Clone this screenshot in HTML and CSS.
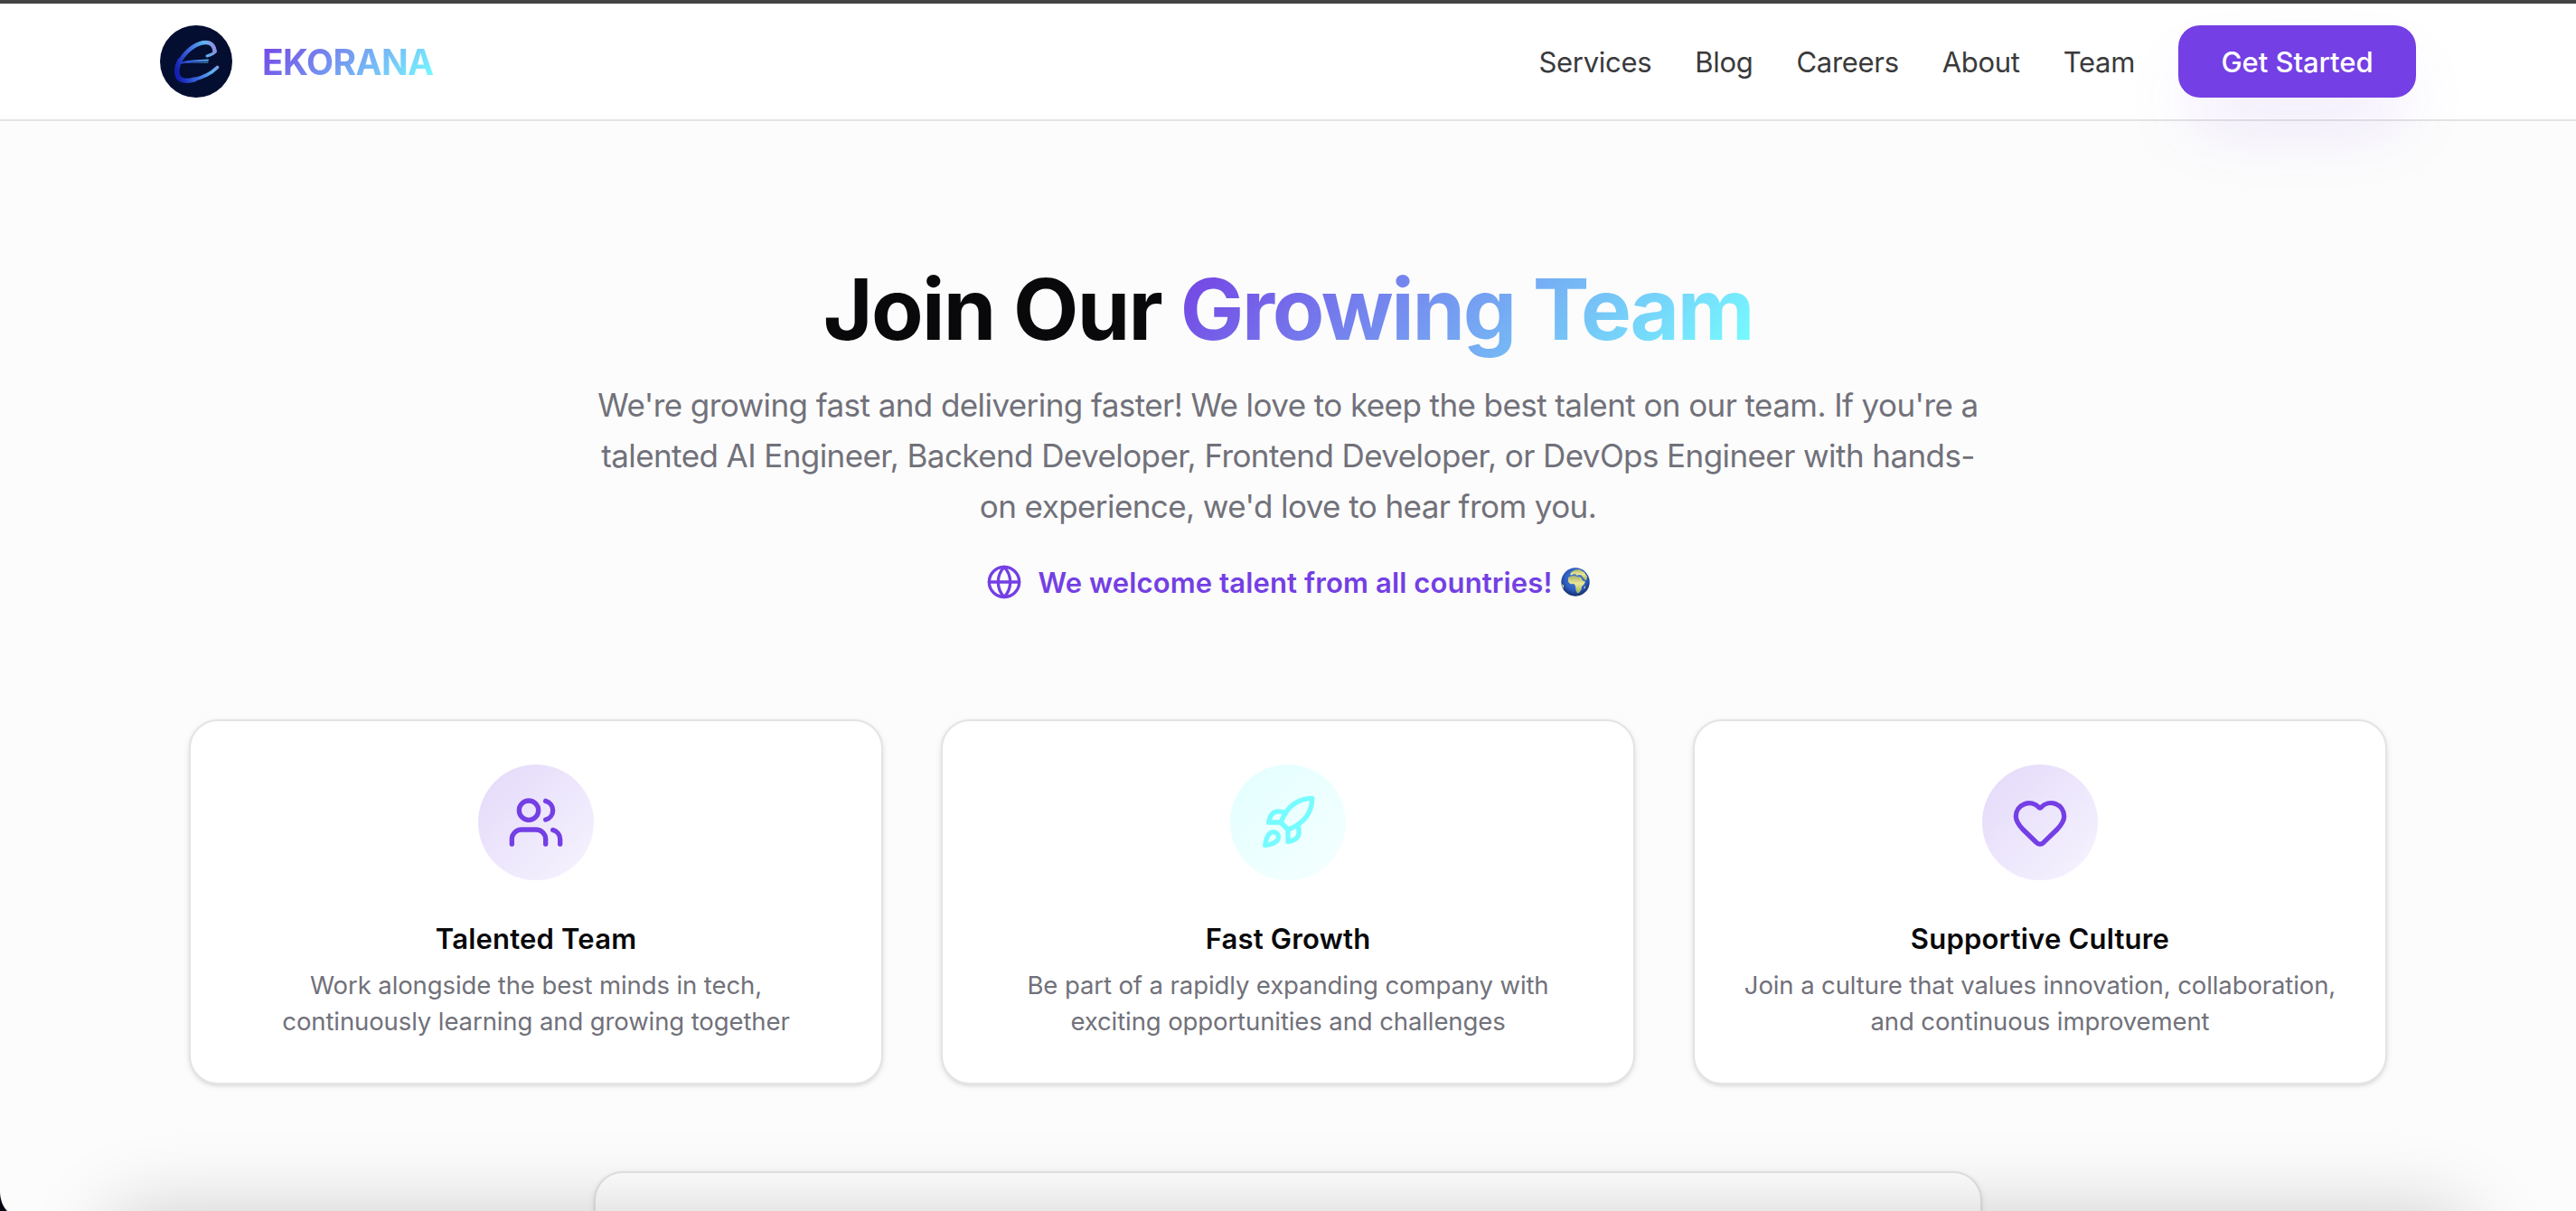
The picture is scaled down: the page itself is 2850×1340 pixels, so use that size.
FILE: index.html
```
<!DOCTYPE html>
<html lang="en">
<head>
  <meta charset="UTF-8">
  <title>Careers | Ekorana</title>
  <link rel="stylesheet" href="styles.css">
</head>
<body>

  <!-- Header -->
  <header class="site-header">
    <div class="container nav">
      <a href="#" class="brand">
        <svg class="logo" viewBox="0 0 80 80" fill="none" stroke-linecap="round" stroke-linejoin="round">
          <defs>
            <linearGradient id="logoStroke" gradientUnits="userSpaceOnUse" x1="18" y1="48" x2="66" y2="34">
              <stop offset="0" stop-color="#1420b4"/>
              <stop offset="0.35" stop-color="#3a62dc"/>
              <stop offset="0.75" stop-color="#5cb4f0"/>
              <stop offset="1" stop-color="#a184dc"/>
            </linearGradient>
          </defs>
          <circle cx="40" cy="40" r="40" fill="#040e30"/>
          <g stroke="url(#logoStroke)">
            <path stroke-width="4.4" d="M60.500 29C60 22 56 19 51 19C41 19 30 27 23 38"/>
            <path stroke-width="5.4" d="M22 39C18 45 18 53 20 57C23 62 31 62 38 60"/>
            <path stroke-width="3.8" d="M36 60.500C47 58 57 53 63.500 46.500"/>
            <path stroke-width="2" d="M20 43C30 38.500 42 39.500 53 38.500"/>
            <path stroke-width="1" d="M28 41.500C38 40.500 46 41.500 53 41"/>
            <path stroke-width="3" d="M61.500 28.500C60 31.500 57 32.500 52 34"/>
          </g>
        </svg>
        <span class="brand-name gradient-text">EKORANA</span>
      </a>
      <nav class="nav-links">
        <a href="#">Services</a>
        <a href="#">Blog</a>
        <a href="#">Careers</a>
        <a href="#">About</a>
        <a href="#">Team</a>
        <a href="#" class="btn">Get Started</a>
      </nav>
    </div>
  </header>

  <main>
    <!-- Hero -->
    <section class="hero">
      <h1>Join Our <span class="gradient-text">Growing Team</span></h1>
      <p class="lead">We're growing fast and delivering faster! We love to keep the best talent on our team. If you're a talented AI Engineer, Backend Developer, Frontend Developer, or DevOps Engineer with hands-on experience, we'd love to hear from you.</p>
      <div class="welcome">
        <svg class="icon" viewBox="0 0 24 24">
          <circle cx="12" cy="12" r="10"/>
          <path d="M12 2a14.500 14.500 0 0 0 0 20 14.500 14.500 0 0 0 0-20"/>
          <path d="M2 12h20"/>
        </svg>
        <span>We welcome talent from all countries!</span>
        <svg class="earth" viewBox="0 0 32 32">
          <defs>
            <radialGradient id="sea" cx="0.5" cy="0.4" r="0.6">
              <stop offset="0" stop-color="#4b86d8"/>
              <stop offset="0.65" stop-color="#2c5cc0"/>
              <stop offset="1" stop-color="#142c6c"/>
            </radialGradient>
            <linearGradient id="land" x1="0" y1="0" x2="0" y2="1">
              <stop offset="0" stop-color="#a9b06a"/>
              <stop offset="0.45" stop-color="#ece896"/>
              <stop offset="1" stop-color="#9cb05c"/>
            </linearGradient>
          </defs>
          <circle cx="16" cy="16" r="15.700" fill="url(#sea)"/>
          <g fill="url(#land)">
            <path d="M8 11l3-1.500 4-.500 3 1.200 4 .300 2 4 3 1-1.500 3-2.500 2.500-.500 3.500-2.500 3.500-2 .500-1.500-3.500-.500-4.500-1.500-2.500-4 .300-2.500-2.500z"/>
            <path d="M10 7.500l1.500-2.500 4-2.500 5-.500 5 3 3.500 5-.500 4-2 0-2.500-3.500-1.500-2-3-.500-1.500 1-2.500-2-2 .500-2 1z"/>
            <path d="M1 18l2 1.500 0 4-1.200-2z"/>
            <path d="M25.500 22l1-2 .500 2-1 2z"/>
          </g>
        </svg>
      </div>
    </section>

    <!-- Feature cards -->
    <section class="cards">
      <article class="card">
        <div class="icon-circle purple">
          <svg class="icon" viewBox="0 0 24 24">
            <path d="M16 21v-2a4 4 0 0 0-4-4H6a4 4 0 0 0-4 4v2"/>
            <path d="M16 3.128a4 4 0 0 1 0 7.744"/>
            <path d="M22 21v-2a4 4 0 0 0-3-3.870"/>
            <circle cx="9" cy="7" r="4"/>
          </svg>
        </div>
        <h3>Talented Team</h3>
        <p>Work alongside the best minds in tech,<br>continuously learning and growing together</p>
      </article>
      <article class="card">
        <div class="icon-circle cyan">
          <svg class="icon" viewBox="0 0 24 24">
            <path d="M4.500 16.500c-1.500 1.260-2 5-2 5s3.740-.500 5-2c.710-.840.700-2.130-.090-2.910a2.180 2.180 0 0 0-2.910-.090z"/>
            <path d="m12 15-3-3a22 22 0 0 1 2-3.950A12.880 12.880 0 0 1 22 2c0 2.720-.780 7.500-6 11a22.350 22.350 0 0 1-4 2z"/>
            <path d="M9 12H4s.550-3.030 2-4c1.620-1.080 5 0 5 0"/>
            <path d="M12 15v5s3.030-.550 4-2c1.080-1.620 0-5 0-5"/>
          </svg>
        </div>
        <h3>Fast Growth</h3>
        <p>Be part of a rapidly expanding company with<br>exciting opportunities and challenges</p>
      </article>
      <article class="card">
        <div class="icon-circle purple">
          <svg class="icon" viewBox="0 0 24 24">
            <path d="M2 9.500a5.500 5.500 0 0 1 9.591-3.676.560.560 0 0 0 .818 0A5.490 5.490 0 0 1 22 9.500c0 2.290-1.500 4-3 5.500l-5.492 5.313a2 2 0 0 1-3 .019L5 15c-1.500-1.500-3-3.200-3-5.500"/>
          </svg>
        </div>
        <h3>Supportive Culture</h3>
        <p>Join a culture that values innovation, collaboration,<br>and continuous improvement</p>
      </article>
    </section>

    <section class="card panel"></section>
  </main>

  <!-- Window edges -->
  <div class="bottom-shadow"></div>
  <svg class="corner" viewBox="0 0 8 22"><path d="M0 0C0 9 3 17 8 22H0Z" fill="#0a0414"/></svg>

</body>
</html>
```
FILE: styles.css
```
* {
  box-sizing: border-box;
}

html, body {
  height: 100%;
}

body {
  margin: 0;
  overflow: hidden;
  background: #fcfcfc;
  color: #09090b;
  font-family: Inter, 'Noto Sans', sans-serif;
  border-top: 4px solid #434343;
}

a {
  color: inherit;
  text-decoration: none;
}

.gradient-text {
  background: linear-gradient(135deg, #743fe4, #76fbff 97%);
  -webkit-background-clip: text;
  background-clip: text;
  color: transparent;
}

.icon {
  display: block;
  fill: none;
  stroke: currentColor;
  stroke-width: 2;
  stroke-linecap: round;
  stroke-linejoin: round;
}

/* Header */
.site-header {
  background: #fff;
  border-bottom: 2px solid #e4e4e4;
}

.container {
  width: 2496px;
  margin: 0 auto;
}

.nav {
  display: flex;
  align-items: center;
  justify-content: space-between;
  padding: 24px 0;
}

.brand {
  display: flex;
  align-items: center;
  gap: 33px;
}

.logo {
  width: 80px;
  height: 80px;
}

.brand-name {
  padding-top: 1px;
  font-size: 39px;
  font-weight: 700;
  letter-spacing: -0.61px;
}

.nav-links {
  display: flex;
  align-items: center;
  gap: 48px;
  font-size: 31px;
  letter-spacing: -0.3px;
  color: #3a3a3c;
}

.btn {
  width: 263px;
  height: 80px;
  line-height: 81px;
  border-radius: 24px;
  background: #743fe4;
  color: #fff;
  font-weight: 500;
  letter-spacing: -0.05px;
  text-align: center;
  box-shadow: 0 40px 80px -16px rgba(116, 63, 228, 0.15);
}

/* Hero */
.hero {
  padding-top: 160px;
  text-align: center;
}

h1 {
  margin: 0 0 30px;
  font-size: 94px;
  line-height: 96px;
  font-weight: 700;
  letter-spacing: -1.7px;
}

h1 .gradient-text {
  letter-spacing: -2.3px;
}

.lead {
  width: 1536px;
  margin: 0 auto 36px;
  font-size: 35px;
  line-height: 56px;
  letter-spacing: -0.58px;
  color: #71717a;
}

.welcome {
  display: flex;
  align-items: center;
  justify-content: center;
  height: 40px;
  font-size: 31px;
  font-weight: 600;
  letter-spacing: 0.13px;
  color: #743fe4;
}

.welcome .icon {
  width: 40px;
  height: 40px;
  margin-right: 17px;
}

.earth {
  width: 32px;
  height: 32px;
  margin-left: 9px;
}

/* Cards */
.cards {
  display: grid;
  grid-template-columns: repeat(3, 1fr);
  gap: 64px;
  width: 2432px;
  margin: 132px auto 96px;
}

.card {
  padding: 48px;
  border: 2px solid #e4e4e4;
  border-radius: 32px;
  background: #fff;
  text-align: center;
  box-shadow: 0 2px 6px rgba(0, 0, 0, 0.1), 0 2px 4px -2px rgba(0, 0, 0, 0.1);
}

.icon-circle {
  display: flex;
  align-items: center;
  justify-content: center;
  width: 128px;
  height: 128px;
  margin: 0 auto 48px;
  border-radius: 50%;
}

.icon-circle .icon {
  width: 64px;
  height: 64px;
}

.purple {
  background: linear-gradient(135deg, #e3d9fa, #f7f4fe);
  color: #743fe4;
}

.cyan {
  background: linear-gradient(135deg, #e2ffff, #f6ffff);
  color: #76fbff;
}

.card h3 {
  margin: 0 0 16px;
  font-size: 31px;
  line-height: 33px;
  height: 32px;
  font-weight: 600;
  letter-spacing: 0.2px;
}

.card p {
  margin: 0;
  font-size: 27.5px;
  line-height: 40px;
  letter-spacing: -0.1px;
  color: #71717a;
}

.panel {
  width: 1536px;
  height: 44px;
  margin: 0 auto;
  padding: 0;
  border-bottom: 0;
  border-radius: 32px 32px 0 0;
}

/* Window edges */
.bottom-shadow {
  position: fixed;
  top: 100%;
  left: 120px;
  right: 120px;
  height: 200px;
  border-radius: 30px;
  box-shadow: 0 0 88px rgba(0, 0, 0, 0.19);
}

.corner {
  position: fixed;
  left: 0;
  bottom: 0;
  width: 8px;
  height: 22px;
}
```
